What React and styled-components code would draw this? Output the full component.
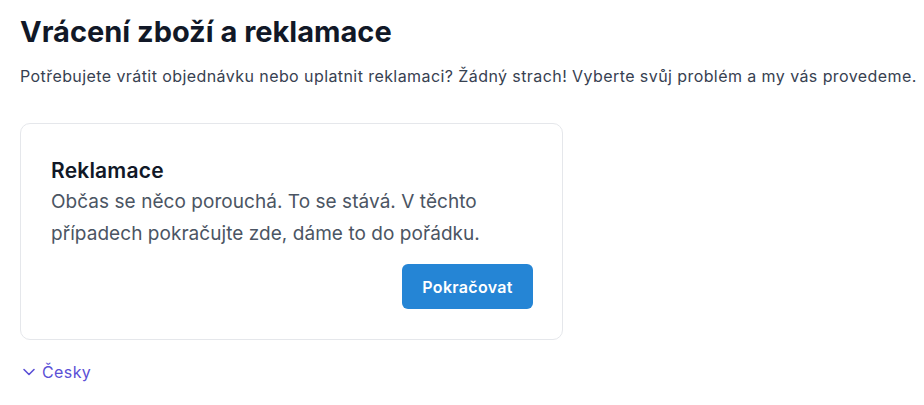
import React from "react";
import styled, { createGlobalStyle } from "styled-components";

const GlobalStyle = createGlobalStyle`
  body {
    margin: 0;
    background: #ffffff;
    font-family: Inter, "Noto Sans", sans-serif;
  }
`;

const Page = styled.div`
  padding: 14px 20px 20px 20px;
`;

const Heading = styled.h1`
  margin: 0;
  font-size: 29px;
  line-height: 36px;
  font-weight: 700;
  color: #111827;
`;

const Lead = styled.p`
  margin: 14px 0 0 0;
  font-size: 16px;
  line-height: 24px;
  letter-spacing: 0.42px;
  white-space: nowrap;
  color: #374151;
`;

const Card = styled.div`
  margin-top: 35px;
  width: 543px;
  box-sizing: border-box;
  border: 1px solid #e5e7eb;
  border-radius: 10px;
  padding: 32px 29px 30px 30px;
  display: flex;
  flex-direction: column;
`;

const CardTitle = styled.h2`
  margin: 0;
  font-size: 21px;
  line-height: 30px;
  font-weight: 600;
  letter-spacing: 0.2px;
  color: #111827;
`;

const CardText = styled.p`
  margin: 0;
  font-size: 19px;
  line-height: 32px;
  letter-spacing: 0.05px;
  color: #4b5563;
`;

const Actions = styled.div`
  display: flex;
  justify-content: flex-end;
  margin-top: 14px;
`;

const Button = styled.button`
  border: none;
  background: #2585d5;
  color: #ffffff;
  font-family: Inter, "Noto Sans", sans-serif;
  font-size: 16px;
  font-weight: 600;
  letter-spacing: 0.3px;
  width: 131px;
  height: 45px;
  padding: 0;
  border-radius: 6px;
  cursor: pointer;
`;

const LangSwitch = styled.button`
  margin-top: 20px;
  display: flex;
  align-items: center;
  gap: 6px;
  border: none;
  background: none;
  padding: 0 0 0 2px;
  color: #5b50d6;
  font-family: Inter, "Noto Sans", sans-serif;
  font-size: 16px;
  line-height: 24px;
  letter-spacing: 0.4px;
  cursor: pointer;
`;

function Chevron() {
  return (
    <svg width="14" height="14" viewBox="0 0 14 14" fill="none">
      <path d="M2 4.5l5 5 5-5" stroke="#5b50d6" strokeWidth="1.6" strokeLinecap="round" strokeLinejoin="round" />
    </svg>
  );
}

export default function App() {
  return (
    <>
      <GlobalStyle />
      <Page>
        <Heading>Vrácení zboží a reklamace</Heading>
        <Lead>
          Potřebujete vrátit objednávku nebo uplatnit reklamaci? Žádný strach! Vyberte svůj problém a my vás provedeme.
        </Lead>
        <Card>
          <CardTitle>Reklamace</CardTitle>
          <CardText>
            Občas se něco porouchá. To se stává. V těchto případech pokračujte zde, dáme to do pořádku.
          </CardText>
          <Actions>
            <Button>Pokračovat</Button>
          </Actions>
        </Card>
        <LangSwitch>
          <Chevron />
          Česky
        </LangSwitch>
      </Page>
    </>
  );
}
